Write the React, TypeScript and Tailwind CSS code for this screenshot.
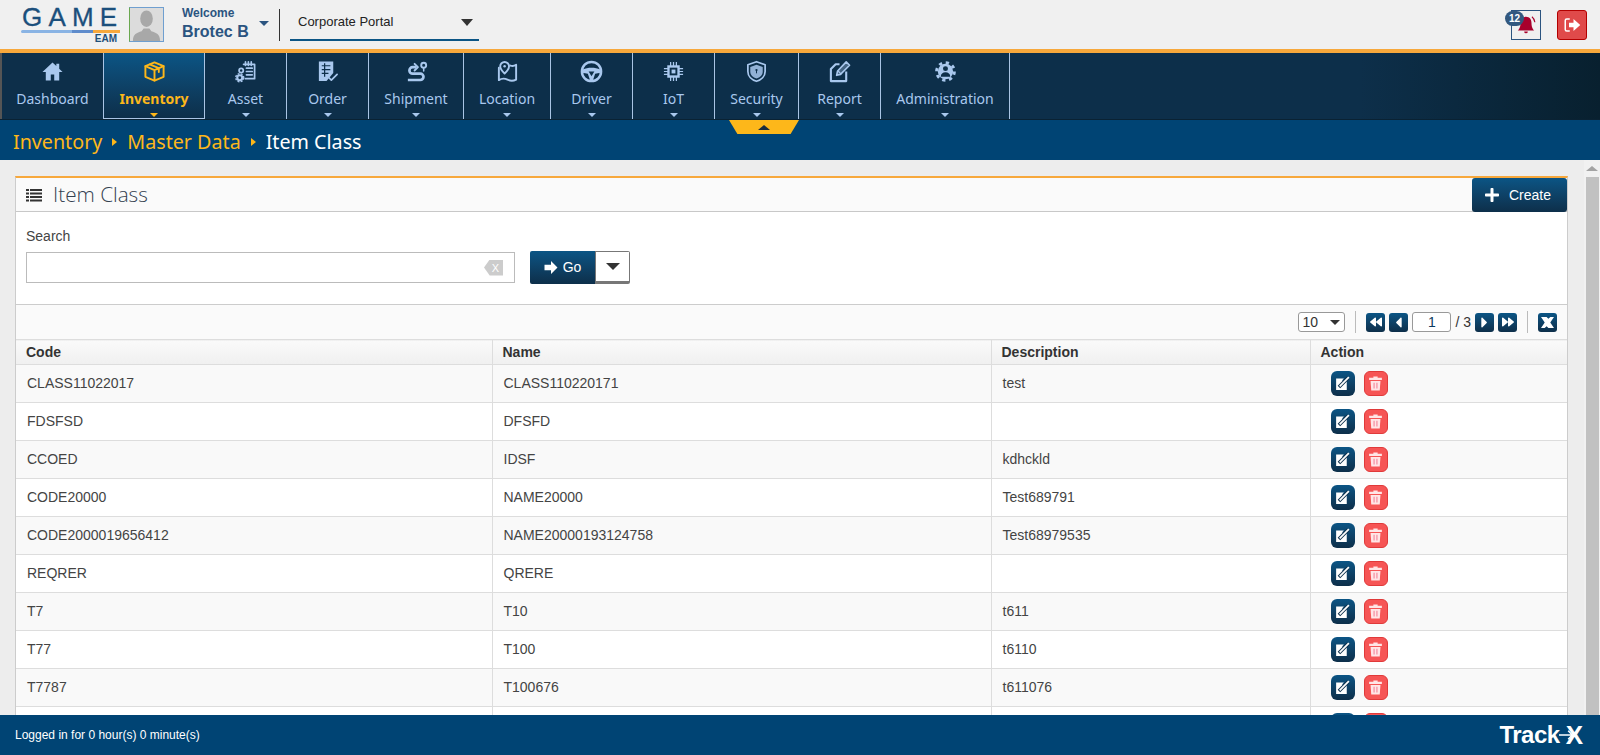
import type { ReactNode } from 'react'
import { FaPlus, FaBackward, FaForward, FaCaretLeft, FaCaretRight } from 'react-icons/fa'

function NavSvg({ children }: { children: ReactNode }) {
  return (
    <svg viewBox="0 0 24 24" className="w-[23px] h-[23px]" fill="none" stroke="currentColor" strokeWidth="2" strokeLinejoin="round" strokeLinecap="round">
      {children}
    </svg>
  )
}

const HomeIcon = () => (
  <NavSvg>
    <path fill="currentColor" stroke="none" d="M12 2.5 1.5 12.5H5v9h5.2v-6.5h3.6v6.5H19v-9h3.5L19 9.2V4h-3v2.3z" />
  </NavSvg>
)
const BoxIcon = () => (
  <NavSvg>
    <path d="M12 2.5 21.5 6.5V17.5L12 21.5 2.5 17.5V6.5z" />
    <path d="M2.5 6.5 12 10.5 21.5 6.5M12 10.5V21.5M7 4.6 16.5 8.6V12.5" />
  </NavSvg>
)
const AssetIcon = () => (
  <NavSvg>
    <path strokeWidth="1.8" d="M10 4.5h11.5v15H12M13 8.5h6M13 12h6M13 15.5h6M12 2v3.5M15 2v3.5M18 2v3.5" />
    <circle cx="7.5" cy="11" r="2.2" strokeWidth="1.8" />
    <circle cx="6" cy="18.5" r="2.6" strokeWidth="2.2" />
    <circle cx="6" cy="18.5" r="4.2" strokeWidth="1.4" strokeDasharray="2 1.4" strokeLinecap="butt" />
  </NavSvg>
)
const OrderIcon = () => (
  <NavSvg>
    <path fill="currentColor" stroke="none" d="M3 1.5h15v12l-7 8.5H3z" />
    <path stroke="#0d2f4a" strokeWidth="1.3" strokeLinecap="butt" d="M6 6h9M6 10h9M6 14h7M9 3.5v14" />
    <path strokeWidth="1.8" d="M13 18l3 3 6-6" />
  </NavSvg>
)
const ShipmentIcon = () => (
  <NavSvg>
    <path strokeWidth="2.8" strokeLinecap="butt" d="M12 7.5H8a3.4 3.4 0 0 0 0 6.8h8a3.3 3.3 0 0 1 0 6.6H3" />
    <path strokeWidth="2" d="M10 4l3.5 3.5L10 11" />
    <circle cx="19.5" cy="5.5" r="2.6" strokeWidth="2" />
    <path strokeWidth="1.6" d="M19.5 9v2.5" />
  </NavSvg>
)
const LocationIcon = () => (
  <NavSvg>
    <path d="M3 8v13c3-2 6-2 9-.5s6 1.5 9 0V5c-2 1.300-4 1.500-6 .8" />
    <path fill="#0d2f4a" d="M9 2a4.600 4.600 0 0 1 4.600 4.600C13.600 10 9 14 9 14S4.400 10 4.400 6.600A4.600 4.600 0 0 1 9 2z" />
    <circle cx="9" cy="6.500" r="1.300" fill="currentColor" stroke="none" />
  </NavSvg>
)
const DriverIcon = () => (
  <NavSvg>
    <circle cx="12" cy="12" r="10" strokeWidth="2.6" />
    <path fill="currentColor" stroke="none" d="M3 10c5-2.400 13-2.400 18 0l.4 3.400-5.600 1-2.300 6.600h-3l-2.300-6.600-5.600-1z" />
    <path fill="#0d2f4a" stroke="none" d="M9 12h6l-3 5z" />
  </NavSvg>
)
const IotIcon = () => (
  <NavSvg>
    <path strokeWidth="1.3" strokeLinecap="butt" d="M9 2v20M12 2v20M15 2v20M2 9h20M2 12h20M2 15h20" />
    <rect x="5.500" y="5.500" width="13" height="13" fill="currentColor" stroke="none" />
    <rect x="8" y="8" width="8" height="8" fill="#0d2f4a" stroke="none" />
    <rect x="10" y="10" width="4" height="4" fill="currentColor" stroke="none" />
  </NavSvg>
)
const SecurityIcon = () => (
  <NavSvg>
    <path strokeWidth="1.8" d="M12 1.800 21 5v7c0 5-4 8.800-9 10.200C7 20.800 3 17 3 12V5z" />
    <path fill="currentColor" fillOpacity="0.85" stroke="none" d="M12 5 18.500 7.200V12c0 3.600-2.800 6.200-6.500 7.400C8.300 18.200 5.500 15.600 5.500 12V7.200z" />
    <circle cx="12" cy="10.500" r="1.200" fill="#0d2f4a" stroke="none" />
    <path stroke="#0d2f4a" strokeWidth="1" d="M12 11v2.500" />
  </NavSvg>
)
const ReportIcon = () => (
  <NavSvg>
    <path strokeWidth="2.2" strokeLinecap="butt" d="M12 4.500H8L3 9.500V22h16V12" />
    <path fill="currentColor" fillOpacity="0.35" strokeWidth="1.700" d="M9 16l1-4.500L19 2l3.500 3.500-9.500 9.500z" />
    <path strokeWidth="1.300" d="M11 12l2.500 2.500" />
  </NavSvg>
)
const AdminIcon = () => (
  <NavSvg>
    <circle cx="12" cy="12" r="9.300" strokeWidth="3" strokeDasharray="3.400 3.900" strokeLinecap="butt" />
    <circle cx="12" cy="12" r="8" fill="currentColor" stroke="none" />
    <circle cx="12" cy="9" r="2.600" fill="#0d2f4a" stroke="none" />
    <path fill="#0d2f4a" stroke="none" d="M7 17.500c0-3 2.200-4.700 5-4.700s5 1.700 5 4.700z" />
  </NavSvg>
)

const navItems = [
  { label: 'Dashboard', icon: HomeIcon, width: 'w-[104px]', caret: false },
  { label: 'Inventory', icon: BoxIcon, width: 'w-[101px]', caret: true, active: true },
  { label: 'Asset', icon: AssetIcon, width: 'w-[82px]', caret: true },
  { label: 'Order', icon: OrderIcon, width: 'w-[82px]', caret: true },
  { label: 'Shipment', icon: ShipmentIcon, width: 'w-[95px]', caret: true },
  { label: 'Location', icon: LocationIcon, width: 'w-[87px]', caret: true },
  { label: 'Driver', icon: DriverIcon, width: 'w-[82px]', caret: true },
  { label: 'IoT', icon: IotIcon, width: 'w-[82px]', caret: true },
  { label: 'Security', icon: SecurityIcon, width: 'w-[84px]', caret: true },
  { label: 'Report', icon: ReportIcon, width: 'w-[82px]', caret: true },
  { label: 'Administration', icon: AdminIcon, width: 'w-[129px]', caret: true },
]

const rows = [
  ['CLASS11022017', 'CLASS110220171', 'test'],
  ['FDSFSD', 'DFSFD', ''],
  ['CCOED', 'IDSF', 'kdhckld'],
  ['CODE20000', 'NAME20000', 'Test689791'],
  ['CODE2000019656412', 'NAME20000193124758', 'Test68979535'],
  ['REQRER', 'QRERE', ''],
  ['T7', 'T10', 't611'],
  ['T77', 'T100', 't6110'],
  ['T7787', 'T100676', 't611076'],
  ['', '', ''],
]

function PagerButton({ children }: { children: ReactNode }) {
  return (
    <button className="w-[19px] h-[19px] rounded-[3px] bg-gradient-to-b from-[#0b5585] to-[#0d2f4a] text-white flex items-center justify-center overflow-hidden">
      {children}
    </button>
  )
}

export default function App() {
  return (
    <div className="h-screen flex flex-col overflow-hidden bg-[#ededed] font-['Liberation_Sans',sans-serif]">
      {/* top bar */}
      <header className="h-[49px] shrink-0 bg-[#f0f0f0] flex items-center pl-[21px] pr-[13px]">
        <div className="w-[99px] flex flex-col items-stretch">
          <div className="text-[#1b4f7c] text-[26px] leading-[25px] tracking-[6.200px] pl-[1px] [-webkit-text-stroke:0.3px_#1b4f7c]">GAME</div>
          <div className="h-[3px] flex rounded-l-full overflow-hidden">
            <div className="w-[51px] bg-[#8ab4e4]" />
            <div className="w-[21px] bg-[#5f8ccc]" />
            <div className="flex-1 bg-[#f7a83c]" />
          </div>
          <div className="text-[10px] leading-[10px] font-bold text-[#1f4f79] text-right pr-[3px] mt-[1px]">EAM</div>
        </div>
        <div className="ml-[9px] w-[35px] h-[35px] border border-[#6f9fd0] border-l-[#6aa84f] bg-[#dcdcdc] overflow-hidden">
          <svg viewBox="0 0 34 34" className="w-full h-full" fill="#a8a8a8">
            <ellipse cx="17" cy="11" rx="6.500" ry="8.500" />
            <path d="M3 34c0-7 4-8.500 9-10l2-3h6l2 3c5 1.500 9 3 9 10z" />
          </svg>
        </div>
        <div className="ml-[18px] w-[72px] text-[#2b5480]">
          <div className="text-[12px] leading-[14px] font-bold mt-[-1px]">Welcome</div>
          <div className="text-[16px] leading-[20px] font-bold mt-[2px]">Brotec B</div>
        </div>
        <div className="ml-[5px] mt-[-3px] w-0 h-0 border-x-[5px] border-t-[5px] border-x-transparent border-t-[#2b5480]" />
        <div className="ml-[10px] w-px h-[32px] bg-[#333]" />
        <div className="ml-[10px] w-[189px] h-[32px] border-b-2 border-[#0b5585] flex items-center justify-between pl-[8px] pr-[6px] pb-[3px] text-[13px] text-[#222]">
          <span>Corporate Portal</span>
          <div className="w-0 h-0 border-x-[6px] border-t-[7px] border-x-transparent border-t-[#333]" />
        </div>
        <div className="ml-auto flex items-center gap-[16px]">
          <div className="relative w-[30px] h-[30px] border border-[#2b5480] flex items-center justify-center">
            <svg viewBox="0 0 24 24" className="w-[22px] h-[22px]" fill="#a8002c">
              <path d="M12 3c-4 0-6 3-6 7 0 5-2 7-3 8h18c-1-1-3-3-3-8 0-4-2-7-6-7zM10 19a2 2 0 0 0 4 0z" />
              <path d="M18.500 3c1.800 1.500 2.800 3.500 3.200 6" fill="none" stroke="#a8002c" strokeWidth="1.200" />
            </svg>
            <span className="absolute left-[-7px] top-[0px] w-[19px] h-[15px] rounded-full bg-[#32587f] text-white text-[10px] leading-[15px] font-bold text-center">12</span>
          </div>
          <div className="w-[30px] h-[30px] rounded-[3px] bg-[#e04a4a] border border-[#b30000] flex items-center justify-center text-white">
            <svg viewBox="0 0 24 24" className="w-[18px] h-[18px]" fill="currentColor">
              <path d="M9 3H5a3 3 0 0 0-3 3v12a3 3 0 0 0 3 3h4v-2H5a1 1 0 0 1-1-1V6a1 1 0 0 1 1-1h4z" />
              <path d="M8 9h6V4l9 8-9 8v-5H8z" />
            </svg>
          </div>
        </div>
      </header>
      <div className="h-[4px] shrink-0 bg-[#f7a83c]" />

      {/* main nav */}
      <nav className="h-[67px] shrink-0 flex bg-gradient-to-r from-[#0d2f4a] from-85% to-[#08202f] border-b border-[#0a2233] font-['Noto_Sans',sans-serif]">
        {navItems.map((item, i) => {
          const Icon = item.icon
          return (
            <div
              key={item.label}
              className={`${item.width} shrink-0 flex flex-col items-center border-r border-[#a9c4e4] pt-[7px] ${i === 0 ? 'border-l-2 border-l-[#555]' : ''} ${item.active ? 'bg-gradient-to-b from-[#0b5585] to-[#0d2f4a] text-[#fdb71a] font-bold border-b' : 'text-[#a9c8ee]'}`}
            >
              <Icon />
              <span className="text-[14px] leading-[20px] mt-[6px]">{item.label}</span>
              {item.caret && <div className="mt-[4px] w-0 h-0 border-x-[4px] border-t-[4px] border-x-transparent border-t-current" />}
            </div>
          )
        })}
      </nav>

      {/* breadcrumb */}
      <div className="relative h-[40px] shrink-0 bg-[#004474] flex items-center pl-[13px] pt-[4px] text-[19.700px] text-[#fdb71a] font-['Noto_Sans',sans-serif]">
        <span>Inventory</span>
        <div className="mx-[10px] w-0 h-0 border-y-[4px] border-l-[5px] border-y-transparent border-l-[#fdb71a]" />
        <span>Master Data</span>
        <div className="mx-[10px] w-0 h-0 border-y-[4px] border-l-[5px] border-y-transparent border-l-[#fdb71a]" />
        <span className="text-white">Item Class</span>
        <div className="absolute left-[729px] top-0 w-[70px] h-[14px] bg-[#fdb71a] [clip-path:polygon(0_0,100%_0,88%_100%,12%_100%)] flex items-center justify-center">
          <div className="w-0 h-0 border-x-[6px] border-b-[5px] border-x-transparent border-b-[#1a2c3d]" />
        </div>
      </div>

      {/* content */}
      <main className="flex-1 min-h-0 flex overflow-hidden">
        <div className="flex-1 pl-[15px] pr-[16px] pt-[16px]">
          <section className="border-x border-[#ccc] border-t-2 border-t-[#f7a83c] bg-white">
            <div className="h-[34px] bg-[#fafafa] border-b border-[#c8c8c8] flex items-center pl-[10px]">
              <svg viewBox="0 0 16 14" className="w-[16px] h-[14px]" fill="#333">
                <path d="M0 1h3v2H0zM4 1h12v2H4zM0 4.500h3v2H0zM4 4.500h12v2H4zM0 8h3v2H0zM4 8h12v2H4zM0 11.500h3v2H0zM4 11.500h12v2H4z" />
              </svg>
              <h1 className="ml-[11px] text-[20.700px] text-[#33404f] font-['Open_Sans',sans-serif] font-light">Item Class</h1>
              <button className="ml-auto self-start w-[95px] h-[34px] rounded-[3px] bg-gradient-to-b from-[#0b5585] to-[#0d2f4a] text-white text-[14px] flex items-center pl-[12px] gap-[9px]">
                <FaPlus className="text-[16px]" />
                Create
              </button>
            </div>
            <div className="h-[93px] border-b border-[#ccc] px-[10px] pt-[17px]">
              <label className="block text-[14px] leading-[14px] text-[#444]">Search</label>
              <div className="mt-[8px] flex items-center">
                <div className="w-[489px] h-[31px] border border-[#bbb] flex items-center justify-end pr-[11px]">
                  <span className="w-[19px] h-[16px] bg-[#ccc] text-white text-[11px] text-center leading-[16px] [clip-path:polygon(30%_0,100%_0,100%_100%,30%_100%,0_50%)] pl-[4px]">X</span>
                </div>
                <div className="ml-[15px] w-[100px] h-[33px] flex rounded-[2px] overflow-hidden">
                  <button className="w-[65px] bg-gradient-to-b from-[#0b5585] to-[#0d2f4a] text-white text-[14px] flex items-center justify-center gap-[5px]">
                    <svg viewBox="0 0 14 14" className="w-[14px] h-[13px]" fill="currentColor">
                      <path d="M0 4h7V0l7 7-7 7v-4H0z" />
                    </svg>
                    Go
                  </button>
                  <div className="flex-1 bg-white border border-[#777] border-b-[3px] flex items-center justify-center">
                    <div className="w-0 h-0 border-x-[7px] border-t-[7px] border-x-transparent border-t-[#333]" />
                  </div>
                </div>
              </div>
            </div>
            <div className="h-[34px] bg-[#fafafa] flex items-center justify-end pr-[10px] text-[14px] text-[#333]">
              <div className="w-[47px] h-[20px] border border-[#999] rounded-[3px] bg-white flex items-center justify-between pl-[3px] pr-[4px]">
                <span>10</span>
                <div className="w-0 h-0 border-x-[5px] border-t-[5px] border-x-transparent border-t-[#333]" />
              </div>
              <div className="mx-[10px] w-px h-[22px] bg-[#bbb]" />
              <div className="flex items-center gap-[4px]">
                <PagerButton><FaBackward className="text-[12px]" /></PagerButton>
                <PagerButton><FaCaretLeft className="text-[17px]" /></PagerButton>
                <div className="w-[39px] h-[20px] border border-[#999] rounded-[3px] bg-white text-center leading-[18px] text-[#0b3a5e]">1</div>
                <span>/ 3</span>
                <PagerButton><FaCaretRight className="text-[17px]" /></PagerButton>
                <PagerButton><FaForward className="text-[12px]" /></PagerButton>
              </div>
              <div className="mx-[10px] w-px h-[22px] bg-[#bbb]" />
              <PagerButton>
                <svg viewBox="0 0 16 14" className="w-[15px] h-[13px]" fill="currentColor"><path d="M1 1h6l2 2 2-2h4l-4 6 4 6H9L7 11l-2 2H1l4-6z" /></svg>
              </PagerButton>
            </div>
            <table className="w-full table-fixed border-collapse text-[14px] text-[#444]">
              <colgroup>
                <col className="w-[476px]" />
                <col className="w-[499px]" />
                <col className="w-[319px]" />
                <col />
              </colgroup>
              <thead>
                <tr className="h-[25px] bg-gradient-to-b from-[#fafafa] to-[#f0f0f0] border-y border-[#ddd] text-[#333]">
                  {['Code', 'Name', 'Description', 'Action'].map((h) => (
                    <th key={h} className="text-left font-bold pl-[10px] border-r border-[#ddd] last:border-r-0">{h}</th>
                  ))}
                </tr>
              </thead>
              <tbody>
                {rows.map((r, i) => (
                  <tr key={i} className={`h-[38px] border-b border-[#ddd] ${i % 2 === 0 ? 'bg-[#f9f9f9]' : 'bg-white'}`}>
                    {r.map((c, j) => (
                      <td key={j} className="pl-[11px] border-r border-[#ddd]">{c}</td>
                    ))}
                    <td className="pl-[20px]">
                      <div className="flex items-center gap-[9px]">
                        <button className="w-[24px] h-[25px] rounded-[6px] bg-gradient-to-b from-[#0b5585] to-[#0d2f4a] flex items-center justify-center">
                          <svg viewBox="0 0 24 24" className="w-[17px] h-[17px]">
                            <path fill="#fff" d="M3 5h11l-3 3v0h7v13H3z" />
                            <path stroke="#0d2f4a" strokeWidth="5" d="M7 17 20 4" />
                            <path stroke="#fff" strokeWidth="2.500" d="M8 16 21 3" />
                          </svg>
                        </button>
                        <button className="w-[24px] h-[25px] rounded-[6px] bg-[#f65555] border border-[#e03a3a] flex items-center justify-center">
                          <svg viewBox="0 0 24 24" className="w-[17px] h-[17px]" fill="#ffe6e6">
                            <path d="M9 2h6v2h6v3H3V4h6z" />
                            <path d="M5 8.500h14L18 22H6z" />
                            <path fill="#f79aaa" d="M9 11h2v8H9zM13 11h2v8h-2z" />
                          </svg>
                        </button>
                      </div>
                    </td>
                  </tr>
                ))}
              </tbody>
            </table>
          </section>
        </div>
        {/* scrollbar */}
        <div className="w-[16px] shrink-0 bg-[#f1f1f1] flex flex-col items-center">
          <div className="h-[17px] flex items-center">
            <div className="w-0 h-0 border-x-[6px] border-b-[5px] border-x-transparent border-b-[#a3a3a3]" />
          </div>
          <div className="w-[13px] flex-1 bg-[#c1c1c1]" />
        </div>
      </main>

      {/* footer */}
      <footer className="h-[40px] shrink-0 bg-[#004474] flex items-center justify-between pl-[15px] pr-[17px] text-white text-[12px]">
        <span>Logged in for 0 hour(s) 0 minute(s)</span>
        <div className="flex items-center font-bold leading-none">
          <span className="text-[24px] tracking-[-0.500px]">Track</span>
          <svg viewBox="0 0 18 12" className="w-[15px] h-[12px] ml-[-1px] mr-[-8px]" fill="none" stroke="currentColor" strokeWidth="1.800">
            <path d="M0 6h16M11 1l5 5-5 5" />
          </svg>
          <span className="text-[26px]">X</span>
        </div>
      </footer>
    </div>
  )
}
